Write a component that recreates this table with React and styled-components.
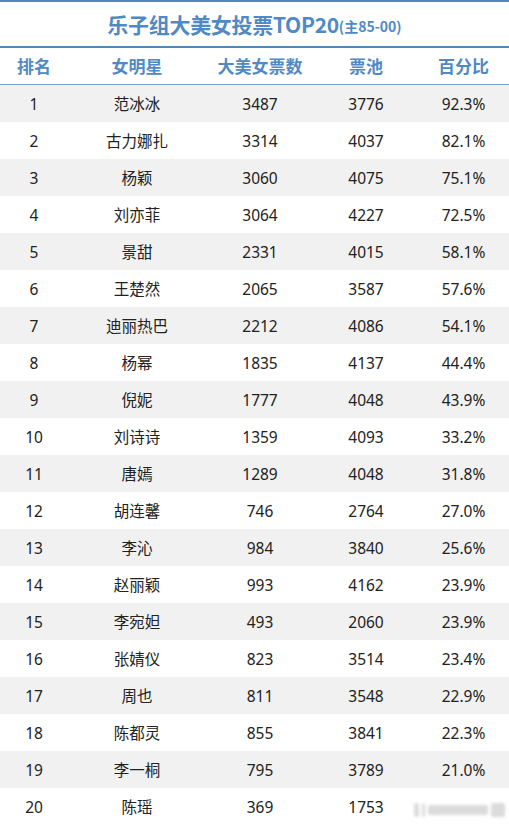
import React from "react";
import styled, { createGlobalStyle } from "styled-components";

const Global = createGlobalStyle`
  html, body { margin: 0; padding: 0; background: #fff; }
  body { font-family: "Noto Sans", "Noto Sans CJK SC", sans-serif; }
`;

const data = [
  [1, "范冰冰", 3487, 3776, "92.3%"],
  [2, "古力娜扎", 3314, 4037, "82.1%"],
  [3, "杨颖", 3060, 4075, "75.1%"],
  [4, "刘亦菲", 3064, 4227, "72.5%"],
  [5, "景甜", 2331, 4015, "58.1%"],
  [6, "王楚然", 2065, 3587, "57.6%"],
  [7, "迪丽热巴", 2212, 4086, "54.1%"],
  [8, "杨幂", 1835, 4137, "44.4%"],
  [9, "倪妮", 1777, 4048, "43.9%"],
  [10, "刘诗诗", 1359, 4093, "33.2%"],
  [11, "唐嫣", 1289, 4048, "31.8%"],
  [12, "胡连馨", 746, 2764, "27.0%"],
  [13, "李沁", 984, 3840, "25.6%"],
  [14, "赵丽颖", 993, 4162, "23.9%"],
  [15, "李宛妲", 493, 2060, "23.9%"],
  [16, "张婧仪", 823, 3514, "23.4%"],
  [17, "周也", 811, 3548, "22.9%"],
  [18, "陈都灵", 855, 3841, "22.3%"],
  [19, "李一桐", 795, 3789, "21.0%"],
  [20, "陈瑶", 369, 1753, ""],
];

const Page = styled.div`
  width: 509px;
  height: 825px;
  overflow: hidden;
  background: #fff;
  position: relative;
`;

const Title = styled.div`
  height: 44px;
  border-top: 2px solid #4f87bd;
  border-bottom: 2px solid #4f87bd;
  display: flex;
  align-items: center;
  justify-content: center;
  color: #5089c4;
  font-family: "Noto Sans CJK SC", sans-serif;
  font-weight: 700;
  font-size: 21px;
  letter-spacing: -0.3px;
  line-height: 1;
`;

const Small = styled.span`
  font-size: 14px;
  margin-top: 4px;
  letter-spacing: 0;
`;

const Grid = styled.div`
  display: grid;
  grid-template-columns: 68px 138px 108px 104px 91px;
  align-items: center;
  height: ${(p) => p.$h}px;
  background: ${(p) => p.$bg || "#fff"};
  border-bottom: ${(p) => (p.$line ? "1px solid #7aa2c9" : "none")};
  box-sizing: border-box;
`;

const HeadCell = styled.div`
  text-align: center;
  color: #5089c4;
  font-family: "Noto Sans CJK SC", sans-serif;
  font-weight: 700;
  font-size: 17px;
  padding-bottom: 2px;
`;

const Cell = styled.div`
  text-align: center;
  color: #222;
  font-family: "Noto Sans", "Noto Sans CJK SC", sans-serif;
  font-size: 15.5px;
`;

const Watermark = styled.div`
  position: absolute;
  right: 4px;
  bottom: 8px;
  display: flex;
  gap: 3px;
  align-items: center;
  filter: blur(1.5px);
  opacity: 0.35;
`;

const Blob = styled.span`
  display: block;
  width: ${(p) => p.$w}px;
  height: ${(p) => p.$h}px;
  background: #999;
  border-radius: 2px;
`;

export default function App() {
  return (
    <>
      <Global />
      <Page>
        <Title>
          乐子组大美女投票TOP20<Small>(主85-00)</Small>
        </Title>
        <Grid $h={37} $line>
          <HeadCell>排名</HeadCell>
          <HeadCell>女明星</HeadCell>
          <HeadCell>大美女票数</HeadCell>
          <HeadCell>票池</HeadCell>
          <HeadCell>百分比</HeadCell>
        </Grid>
        {data.map(([r, n, v, p, pc]) => (
          <Grid key={r} $h={37} $bg={r % 2 === 1 ? "#f1f1f1" : "#fff"}>
            <Cell>{r}</Cell>
            <Cell>{n}</Cell>
            <Cell>{v}</Cell>
            <Cell>{p}</Cell>
            <Cell>{pc}</Cell>
          </Grid>
        ))}
        <Watermark>
          <Blob $w={5} $h={14} />
          <Blob $w={3} $h={14} />
          <Blob $w={60} $h={10} />
          <Blob $w={14} $h={14} />
        </Watermark>
      </Page>
    </>
  );
}
